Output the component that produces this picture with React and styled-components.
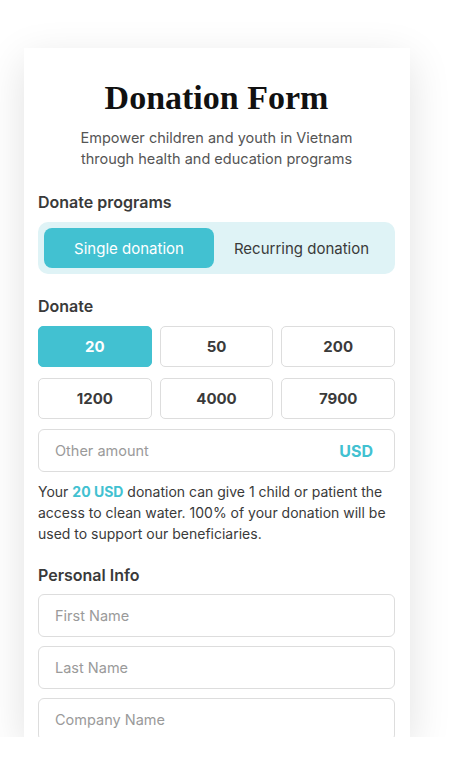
import styled, { createGlobalStyle } from "styled-components";

const amounts = [20, 50, 200, 1200, 4000, 7900];

export default function App() {
  const selected = 20;

  return (
    <>
      <GlobalStyle />
      <Card>
        <Title>Donation Form</Title>
        <Subtitle>
          Empower children and youth in Vietnam
          <br />
          through health and education programs
        </Subtitle>

        <Label>Donate programs</Label>
        <Toggle>
          <ToggleOption $active>Single donation</ToggleOption>
          <ToggleOption>Recurring donation</ToggleOption>
        </Toggle>

        <Label $top={22}>Donate</Label>
        <AmountGrid>
          {amounts.map((value) => (
            <Amount key={value} $active={value === selected}>
              {value}
            </Amount>
          ))}
        </AmountGrid>

        <OtherAmount>
          <Placeholder>Other amount</Placeholder>
          <Currency>USD</Currency>
        </OtherAmount>

        <Note>
          Your <Highlight>{selected} USD</Highlight> donation can give 1 child or
          patient the access to clean water. 100% of your donation will be used
          to support our beneficiaries.
        </Note>

        <Label $top={21}>Personal Info</Label>
        <Fields>
          <Field>
            <Placeholder>First Name</Placeholder>
          </Field>
          <Field>
            <Placeholder>Last Name</Placeholder>
          </Field>
          <Field>
            <Placeholder>Company Name</Placeholder>
          </Field>
        </Fields>
      </Card>
    </>
  );
}

const GlobalStyle = createGlobalStyle`
  body {
    margin: 0;
    background: #ffffff;
    font-family: Inter, "Noto Sans", sans-serif;
    color: #333333;
  }
`;

const Card = styled.div`
  margin: 48px 0 0 24px;
  width: 386px;
  height: 689px;
  box-sizing: border-box;
  padding: 28px 15px 0 14px;
  background: #ffffff;
  overflow: hidden;
  box-shadow: 0 12px 40px rgba(0, 0, 0, 0.12);
`;

const Title = styled.h1`
  margin: 0;
  text-align: center;
  font-family: "Liberation Serif", serif;
  font-weight: bold;
  font-size: 34px;
  line-height: 44px;
  color: #111111;
`;

const Subtitle = styled.p`
  margin: 7px 0 0;
  text-align: center;
  font-size: 14.5px;
  line-height: 21px;
  color: #555555;
`;

const Label = styled.h2`
  margin: ${(p) => p.$top ?? 23}px 0 0;
  font-size: 16px;
  line-height: 20px;
  font-weight: 600;
  color: #3a3a3a;
`;

const Toggle = styled.div`
  margin-top: 10px;
  display: grid;
  grid-template-columns: 170px 1fr;
  padding: 6px;
  background: #dff3f6;
  border-radius: 10px;
`;

const ToggleOption = styled.div`
  height: 40px;
  display: flex;
  align-items: center;
  justify-content: center;
  border-radius: 8px;
  font-size: 15px;
  background: ${(p) => (p.$active ? "#42c1d1" : "transparent")};
  color: ${(p) => (p.$active ? "#ffffff" : "#3a3a3a")};
`;

const AmountGrid = styled.div`
  margin-top: 10px;
  display: grid;
  grid-template-columns: repeat(3, 1fr);
  column-gap: 8px;
  row-gap: 11px;
`;

const Amount = styled.div`
  height: 41px;
  box-sizing: border-box;
  display: flex;
  align-items: center;
  justify-content: center;
  border-radius: 5px;
  border: 1px solid ${(p) => (p.$active ? "#42c1d1" : "#dddddd")};
  background: ${(p) => (p.$active ? "#42c1d1" : "#ffffff")};
  color: ${(p) => (p.$active ? "#ffffff" : "#3a3a3a")};
  font-size: 15px;
  font-weight: 700;
`;

const Field = styled.div`
  height: 43px;
  box-sizing: border-box;
  display: flex;
  align-items: center;
  padding: 0 16px;
  border: 1px solid #dddddd;
  border-radius: 6px;
`;

const OtherAmount = styled(Field)`
  margin-top: 10px;
  justify-content: space-between;
  padding-right: 21px;
`;

const Placeholder = styled.span`
  font-size: 14.5px;
  color: #9a9a9a;
`;

const Currency = styled.span`
  font-size: 16px;
  font-weight: 700;
  color: #42c1d1;
`;

const Note = styled.p`
  margin: 9px 0 0;
  font-size: 14px;
  line-height: 21px;
  color: #3a3a3a;
`;

const Highlight = styled.span`
  font-weight: 700;
  color: #42c1d1;
`;

const Fields = styled.div`
  margin-top: 9px;
  display: flex;
  flex-direction: column;
  gap: 9px;
`;
